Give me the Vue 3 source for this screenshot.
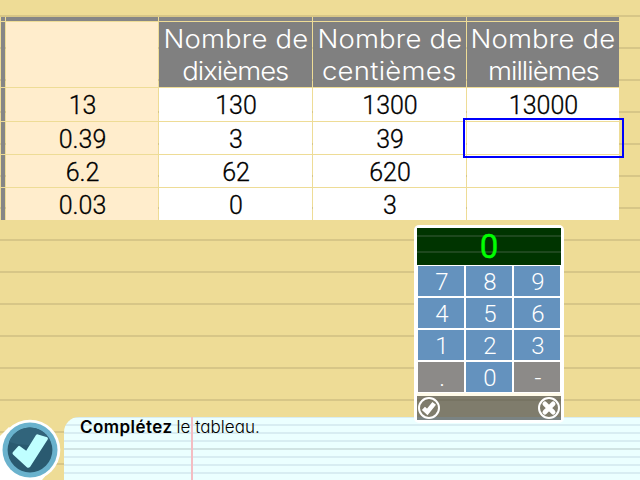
<script setup>
const headers = ['dixièmes', 'centièmes', 'millièmes']
const rows = [
  ['13', '130', '1300', '13000'],
  ['0.39', '3', '39', ''],
  ['6.2', '62', '620', ''],
  ['0.03', '0', '3', ''],
]
const keys = ['7', '8', '9', '4', '5', '6', '1', '2', '3', '.', '0', '-']
</script>

<template>
  <main class="page">
    <section class="table">
      <div v-for="n in 5" :key="'t' + n" class="strip"></div>
      <div class="strip"></div>
      <div class="cell label"></div>
      <div v-for="(h, i) in headers" :key="h" class="cell head">
        <span class="top">Nombre de</span><span :class="'unit' + i">{{ h }}</span>
      </div>
      <template v-for="(row, r) in rows" :key="r">
        <div class="strip"></div>
        <div v-for="(v, c) in row" :key="c" class="cell" :class="{ label: c === 0 }">{{ v }}</div>
      </template>
    </section>
    <div class="selection"></div>

    <footer class="bottom">
      <svg class="badge" width="64" height="64" viewBox="0 416 64 64">
        <path d="M0 436 L9 427 L53 467 L42 480 H0Z" fill="#fff" />
        <circle cx="30" cy="450" r="30.3" fill="#fff" />
        <circle cx="30" cy="450" r="27.5" fill="#6ab2cd" />
        <circle cx="30" cy="450" r="22.4" fill="#2a5a70" />
        <path d="M9 442A22.4 22.4 0 0 1 50 440Q30 449 9 442Z" fill="#31647b" />
        <path d="M12.8 452.2 L18.2 446.2 Q19 445.4 20 446.2 L26.2 450.8 L36 435 Q36.8 434 38 434.4 L47.2 437.2 Q48.4 438 47.8 439.3 L30.2 466.8 Q28.6 468.4 26.8 467.2 L13 454.4 Q12 453.3 12.8 452.2Z" fill="#bfffff" />
      </svg>
      <div class="sheet">
        <p><b>Complétez</b><span>le tableau.</span></p>
      </div>
    </footer>

    <section class="keypad">
      <div class="display">0</div>
      <div class="keys">
        <div v-for="k in keys" :key="k" class="key" :class="{ off: k === '.' || k === '-' }">{{ k }}</div>
      </div>
      <div class="actions">
        <svg width="24" height="24" viewBox="0 0 24 24">
          <circle cx="12" cy="12" r="10" fill="none" stroke="#fff" stroke-width="2" />
          <path d="M6.4 12.4 L10.3 16 L17.2 7.4" fill="none" stroke="#fff" stroke-width="4.6" />
        </svg>
        <svg width="24" height="24" viewBox="0 0 24 24">
          <circle cx="12" cy="12" r="10" fill="none" stroke="#fff" stroke-width="2" />
          <path d="M7.9 7.9 L16.1 16.1 M16.1 7.9 L7.9 16.1" fill="none" stroke="#fff" stroke-width="4.8" stroke-linecap="round" />
        </svg>
      </div>
    </section>
  </main>
</template>

<style>
body { margin: 0; }
</style>

<style scoped>
.page {
  position: relative;
  box-sizing: border-box;
  width: 640px;
  height: 480px;
  padding-top: 17px;
  overflow: hidden;
  display: flex;
  flex-direction: column;
  justify-content: space-between;
  background: repeating-linear-gradient(#eedc96 0 15px, #d7c687 15px 17px, #eedc96 17px 32px);
  font-family: Inter, "Liberation Sans", sans-serif;
}
.table {
  display: grid;
  grid-template-columns: 4px 152px 153px 153px 152px;
  grid-template-rows: 4px 65px 33px 32px 32px 32px;
  gap: 1px;
  padding-left: 1px;
}
.strip { background: #868686; }
.cell {
  box-sizing: border-box;
  padding-left: 1px;
  background: #fff;
  color: #000;
  font: 300 25px/36px Roboto, sans-serif;
  -webkit-text-stroke: 0.3px currentColor;
  text-align: center;
  white-space: nowrap;
}
.label { background: #ffedcc; }
.head {
  display: flex;
  flex-direction: column;
  align-items: center;
  padding: 1px 0 0;
  background: #808080;
  color: #fff;
  font: 300 25px/32px Inter, sans-serif;
  -webkit-text-stroke: 0;
}
.head span { transform: scaleX(1.1); }
.top { letter-spacing: 0.15px; }
.unit0 { letter-spacing: -0.9px; }
.unit1 { letter-spacing: 0.25px; }
.unit2 { letter-spacing: -0.9px; }
.selection {
  position: absolute;
  left: 463px;
  top: 118px;
  box-sizing: border-box;
  width: 161px;
  height: 40px;
  border: 2px solid #0000fc;
}
.bottom { display: flex; height: 64px; }
.badge { flex: none; }
.sheet {
  flex: 1;
  margin-top: 1px;
  border-top-left-radius: 15px;
  background:
    linear-gradient(#f4bdc2, #f4bdc2) 127px 0 / 2px 100% no-repeat,
    linear-gradient(#d0e3e3, #d0e3e3) 0 31px / 100% 2px no-repeat,
    linear-gradient(#d8edf2 1px, #ebffff 1px 7px, #d8edf2 7px) 0 0 / 100% 8px;
}
p {
  margin: 0;
  padding-left: 16px;
  display: flex;
  gap: 4px;
  font-size: 17px;
  line-height: 20px;
  font-weight: 300;
  color: #000;
  font-feature-settings: "cv11";
}
p span { letter-spacing: 0.05px; }
b { font-weight: 600; letter-spacing: 0.45px; }
.keypad {
  position: absolute;
  left: 414px;
  top: 225px;
  box-sizing: border-box;
  width: 150px;
  height: 198px;
  padding: 3px;
  border-radius: 5px;
  background: #fff;
}
.display {
  height: 37px;
  background: linear-gradient(#003400 7px, #1e481e 7px 9px, #003400 9px 23px, #1e481e 23px 25px, #003400 25px);
  color: #0f0;
  font: 400 33px/37px Roboto, sans-serif;
  -webkit-text-stroke: 0.4px #0f0;
  text-align: center;
}
.keys {
  display: grid;
  grid-template-columns: repeat(3, 46px);
  grid-auto-rows: 30px;
  gap: 2px;
  padding: 1px;
}
.key {
  box-sizing: border-box;
  padding-left: 2px;
  background: #6492be;
  color: #fff;
  font: 300 24px/32px Roboto, sans-serif;
  text-align: center;
}
.off { background: #8c8a88; }
.actions {
  display: flex;
  justify-content: space-between;
  height: 24px;
  border-top: 3px solid #fffbe9;
  background: linear-gradient(#7f7c6c 3px, #777463 3px 5px, #7f7c6c 5px 21px, #7a8383 21px);
}
</style>
